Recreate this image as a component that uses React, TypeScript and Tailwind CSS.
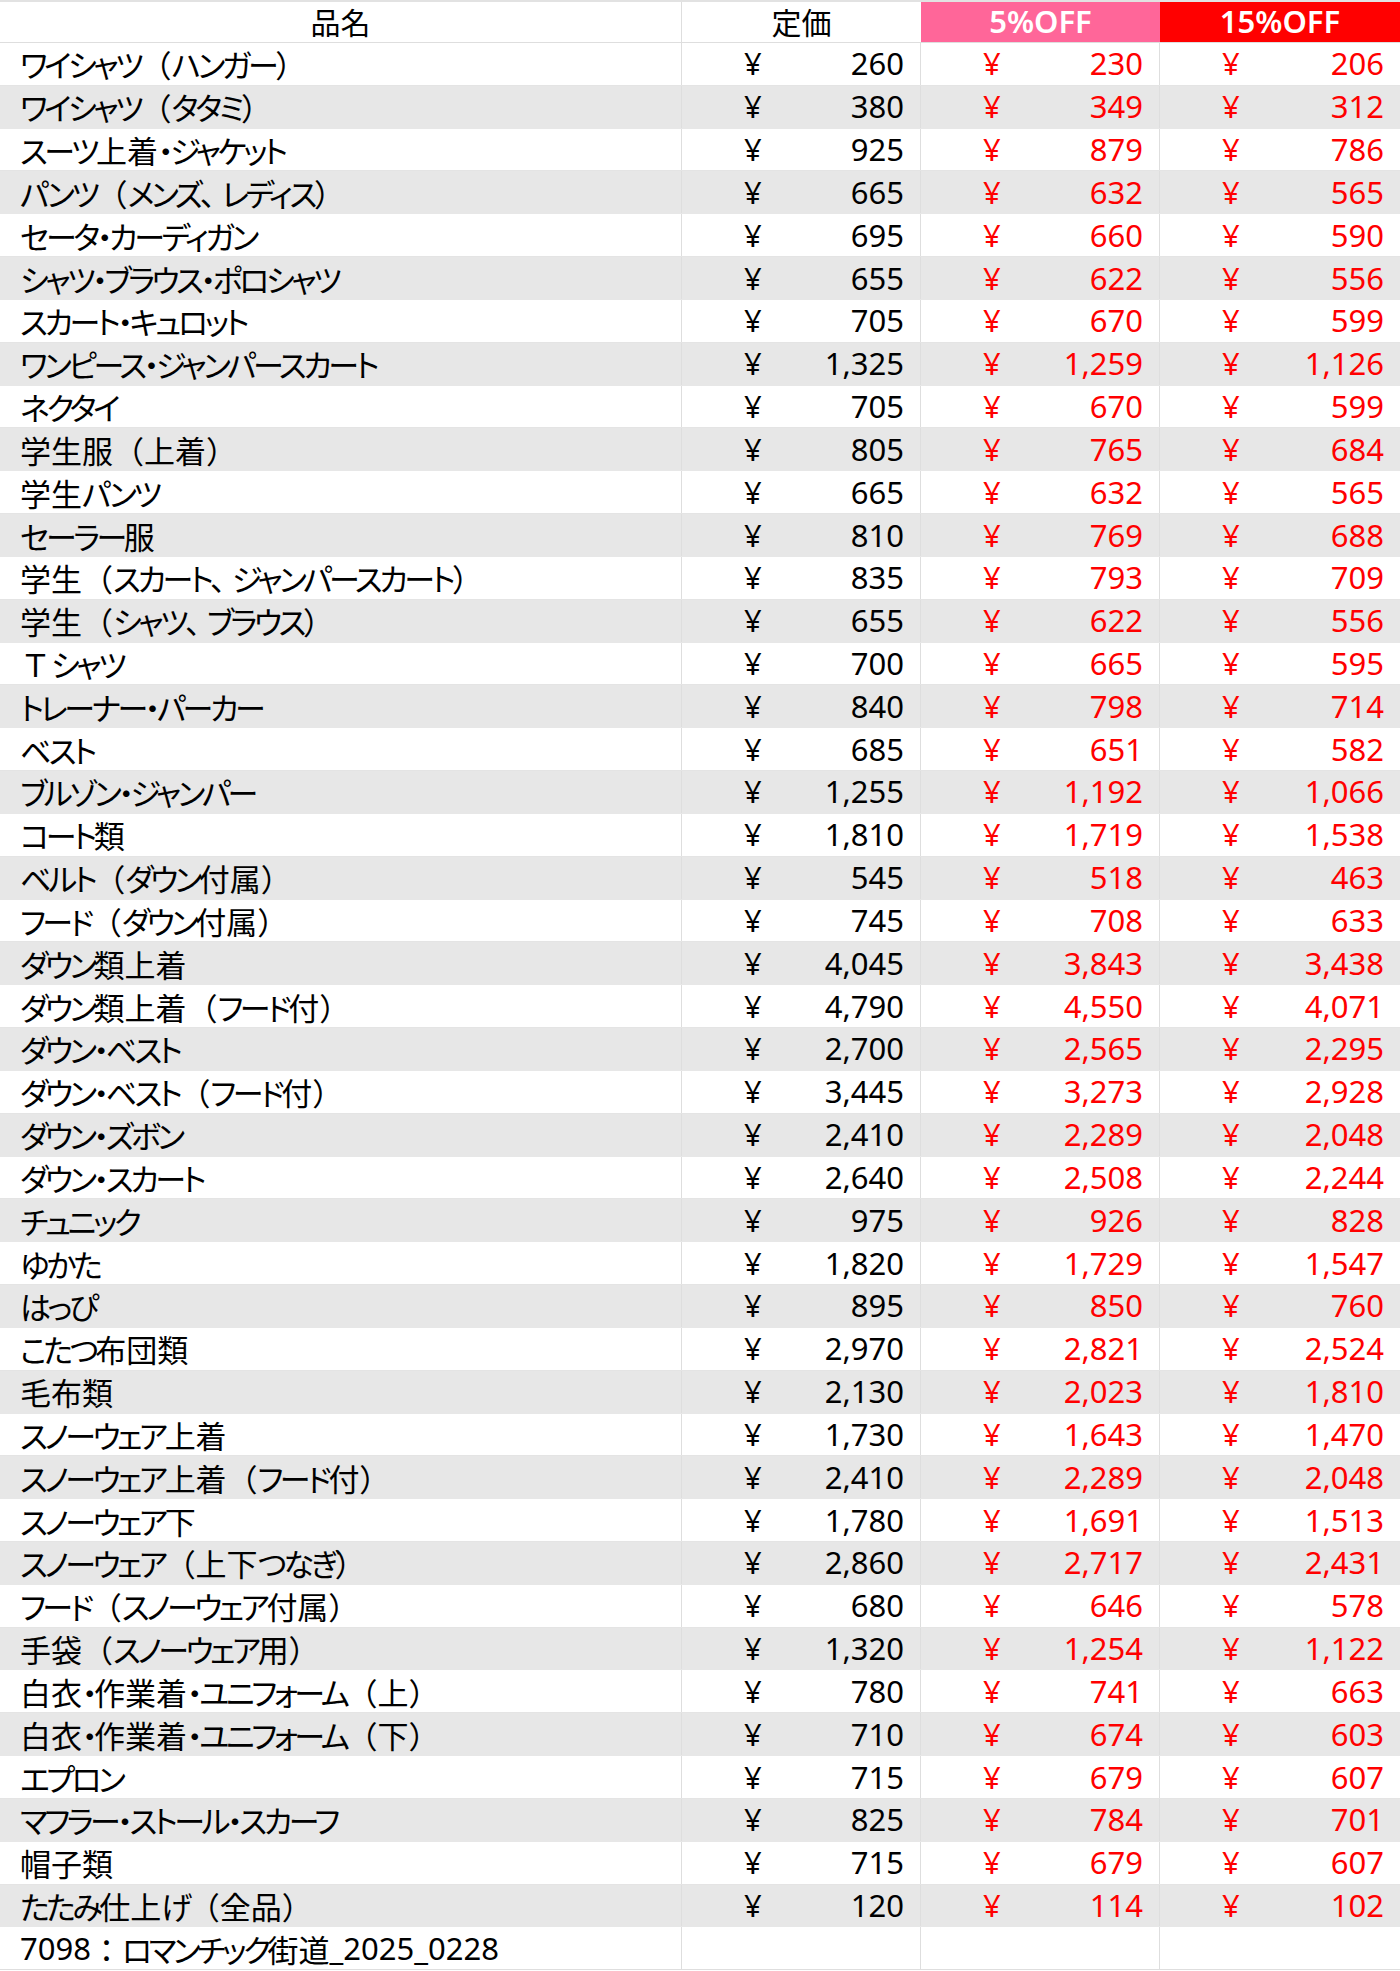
import React from "react";

type Row = [string, string, string, string];

const rows: Row[] = [
  ["ワイシャツ（ハンガー）", "260", "230", "206"],
  ["ワイシャツ（タタミ）", "380", "349", "312"],
  ["スーツ上着・ジャケット", "925", "879", "786"],
  ["パンツ（メンズ、レディス）", "665", "632", "565"],
  ["セータ・カーディガン", "695", "660", "590"],
  ["シャツ・ブラウス・ポロシャツ", "655", "622", "556"],
  ["スカート・キュロット", "705", "670", "599"],
  ["ワンピース・ジャンパースカート", "1,325", "1,259", "1,126"],
  ["ネクタイ", "705", "670", "599"],
  ["学生服（上着）", "805", "765", "684"],
  ["学生パンツ", "665", "632", "565"],
  ["セーラー服", "810", "769", "688"],
  ["学生（スカート、ジャンパースカート）", "835", "793", "709"],
  ["学生（シャツ、ブラウス）", "655", "622", "556"],
  ["Ｔシャツ", "700", "665", "595"],
  ["トレーナー・パーカー", "840", "798", "714"],
  ["ベスト", "685", "651", "582"],
  ["ブルゾン・ジャンパー", "1,255", "1,192", "1,066"],
  ["コート類", "1,810", "1,719", "1,538"],
  ["ベルト（ダウン付属）", "545", "518", "463"],
  ["フード（ダウン付属）", "745", "708", "633"],
  ["ダウン類上着", "4,045", "3,843", "3,438"],
  ["ダウン類上着（フード付）", "4,790", "4,550", "4,071"],
  ["ダウン・ベスト", "2,700", "2,565", "2,295"],
  ["ダウン・ベスト（フード付）", "3,445", "3,273", "2,928"],
  ["ダウン・ズボン", "2,410", "2,289", "2,048"],
  ["ダウン・スカート", "2,640", "2,508", "2,244"],
  ["チュニック", "975", "926", "828"],
  ["ゆかた", "1,820", "1,729", "1,547"],
  ["はっぴ", "895", "850", "760"],
  ["こたつ布団類", "2,970", "2,821", "2,524"],
  ["毛布類", "2,130", "2,023", "1,810"],
  ["スノーウェア上着", "1,730", "1,643", "1,470"],
  ["スノーウェア上着（フード付）", "2,410", "2,289", "2,048"],
  ["スノーウェア下", "1,780", "1,691", "1,513"],
  ["スノーウェア（上下つなぎ）", "2,860", "2,717", "2,431"],
  ["フード（スノーウェア付属）", "680", "646", "578"],
  ["手袋（スノーウェア用）", "1,320", "1,254", "1,122"],
  ["白衣・作業着・ユニフォーム（上）", "780", "741", "663"],
  ["白衣・作業着・ユニフォーム（下）", "710", "674", "603"],
  ["エプロン", "715", "679", "607"],
  ["マフラー・ストール・スカーフ", "825", "784", "701"],
  ["帽子類", "715", "679", "607"],
  ["たたみ仕上げ（全品）", "120", "114", "102"],
];

const JP = { fontFamily: '"Noto Sans CJK JP", "Noto Sans", sans-serif' };
const LATIN = { fontFamily: '"Noto Sans", "Noto Sans CJK JP", sans-serif' };

function JText({ text }: { text: string }) {
  const parts = text.split(/([\u3040-\u30ff]+|、)/).filter((p) => p !== "");
  return (
    <span className="whitespace-nowrap">
      {parts.map((p, i) => {
        if (p === "、") {
          return (
            <span key={i} className="[font-feature-settings:'palt'] pr-[6px]">
              {p}
            </span>
          );
        }
        if (/^[\u3040-\u30ff]+$/.test(p)) {
          return (
            <span key={i} className="[font-feature-settings:'palt'] tracking-[-3.4px]">
              {p}
            </span>
          );
        }
        return <span key={i}>{p}</span>;
      })}
    </span>
  );
}

function Money({ value, red, last }: { value: string; red?: boolean; last?: boolean }) {
  return (
    <div
      className={`flex items-center justify-between pl-[62px] pr-[16px] leading-none ${
        red ? "text-[#ff0000]" : "text-black"
      } ${last ? "" : "border-r border-[#dedede]"}`}
      style={LATIN}
    >
      <span className="text-[31px]">¥</span>
      <span className="text-[31px]">{value}</span>
    </div>
  );
}

export default function App() {
  return (
    <div className="w-[1400px] bg-white" style={JP}>
      <div className="border-t-2 border-[#e2e2e2]">
        <div className="grid grid-cols-[682px_239px_239px_240px] h-[41px] border-b border-[#dedede]">
          <div className="flex items-center justify-center pb-[3px] border-r border-[#dedede] text-[30px] leading-none text-black">
            品名
          </div>
          <div className="flex items-center justify-center pb-[3px] text-[30px] leading-none text-black">
            定価
          </div>
          <div
            className="flex items-center justify-center pb-[2px] bg-[#ff6699] text-[31px] font-semibold leading-none text-white"
            style={LATIN}
          >
            5%OFF
          </div>
          <div
            className="flex items-center justify-center pb-[2px] bg-[#ff0000] text-[31px] font-semibold leading-none text-white"
            style={LATIN}
          >
            15%OFF
          </div>
        </div>
        {rows.map((r, i) => (
          <div
            key={i}
            className={`grid grid-cols-[682px_239px_239px_240px] h-[42.84px] border-b ${
              i % 2 === 1 ? "bg-[#e7e7e7] border-[#e7e7e7]" : "bg-white border-[#e4e4e4]"
            }`}
          >
            <div className="flex items-center pl-[20px] border-r border-[#dedede] text-[31px] leading-none text-black">
              <JText text={r[0]} />
            </div>
            <Money value={r[1]} />
            <Money value={r[2]} red />
            <Money value={r[3]} red last />
          </div>
        ))}
        <div className="grid grid-cols-[682px_239px_239px_240px] h-[42.84px] bg-white border-b border-[#dedede]">
          <div className="flex items-center pl-[20px] border-r border-[#dedede] text-[31px] leading-none text-black whitespace-nowrap">
            <span style={LATIN}>7098</span>
            <span>：</span>
            <span className="[font-feature-settings:'palt'] tracking-[-3.4px]">ロマンチック</span>
            <span>街道</span>
            <span style={LATIN}>_2025_0228</span>
          </div>
          <div className="border-r border-[#dedede]" />
          <div className="border-r border-[#dedede]" />
          <div />
        </div>
      </div>
    </div>
  );
}
